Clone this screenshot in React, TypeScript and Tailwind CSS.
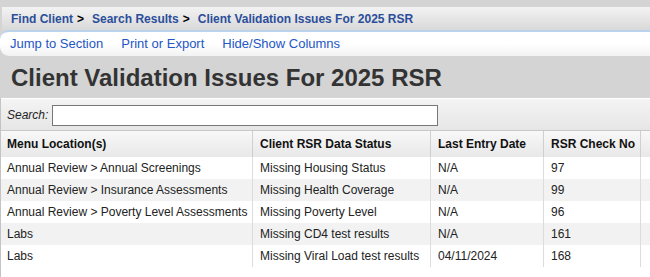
import React from "react";

const rows = [
  { loc: "Annual Review > Annual Screenings", status: "Missing Housing Status", date: "N/A", no: "97" },
  { loc: "Annual Review > Insurance Assessments", status: "Missing Health Coverage", date: "N/A", no: "99" },
  { loc: "Annual Review > Poverty Level Assessments", status: "Missing Poverty Level", date: "N/A", no: "96" },
  { loc: "Labs", status: "Missing CD4 test results", date: "N/A", no: "161" },
  { loc: "Labs", status: "Missing Viral Load test results", date: "04/11/2024", no: "168" },
];

const cols = "grid grid-cols-[252px_178px_113px_97px_1fr]";

export default function App() {
  return (
    <div className="w-[650px] h-[277px] overflow-hidden bg-[#d4d4d4] pt-[7px] font-['Liberation_Sans',Arial,sans-serif]">
      {/* Breadcrumb */}
      <div className="ml-[2px] h-[23px] flex items-center pl-[9px] pt-[1px] bg-gradient-to-b from-[#f3f3f3] to-[#d9d9d9] text-[12px] font-bold">
        <span className="text-[#2b4e9b]">Find Client</span>
        <span className="text-black ml-[4px] mr-[8px]">&gt;</span>
        <span className="text-[#2b4e9b]">Search Results</span>
        <span className="text-black ml-[4px] mr-[8px]">&gt;</span>
        <span className="text-[#2b4e9b]">Client Validation Issues For 2025 RSR</span>
      </div>

      {/* Nav */}
      <div className="h-[26px] border-t-2 border-[#bcd3ee] rounded-l-[9px] bg-gradient-to-b from-white via-white to-[#f2f2f2] flex items-center pl-[10px] gap-[18px] text-[13px] text-[#2356c6]">
        <span>Jump to Section</span>
        <span>Print or Export</span>
        <span>Hide/Show Columns</span>
      </div>

      {/* Title */}
      <div className="h-[42px] flex items-center pl-[11px] pt-[2px]">
        <h1 className="text-[24px] font-bold text-[#333] leading-none">Client Validation Issues For 2025 RSR</h1>
      </div>

      {/* Table container */}
      <div className="border-l border-[#c4c4c4] bg-white h-[182px]">
        <div className="h-[32px] border-t border-white bg-gradient-to-b from-[#f4f4f4] to-[#e6e6e6] flex items-center pl-[6px] pt-[1px]">
          <span className="italic text-[12px] text-[#222] mr-[4px]">Search:</span>
          <input className="w-[386px] h-[21px] bg-white border border-[#777] outline-none" />
        </div>

        <div className={`${cols} h-[27px] border-t border-[#c8c8c8] bg-gradient-to-b from-[#f8f8f8] to-[#e8e8e8] text-[12px] font-bold text-[#111]`}>
          <div className="flex items-center pl-[6px] border-r border-[#cfcfcf]">Menu Location(s)</div>
          <div className="flex items-center pl-[7px] border-r border-[#cfcfcf]">Client RSR Data Status</div>
          <div className="flex items-center pl-[7px] border-r border-[#cfcfcf]">Last Entry Date</div>
          <div className="flex items-center pl-[7px] border-r border-[#cfcfcf]">RSR Check No</div>
          <div />
        </div>

        {rows.map((r, i) => (
          <div
            key={i}
            className={`${cols} h-[22px] text-[12px] text-[#222] ${i % 2 === 1 ? "bg-[#f2f2f2]" : "bg-white"}`}
          >
            <div className="flex items-center pl-[6px] border-r border-[#dcdcdc] whitespace-nowrap">{r.loc}</div>
            <div className="flex items-center pl-[7px] border-r border-[#dcdcdc] whitespace-nowrap">{r.status}</div>
            <div className="flex items-center pl-[7px] border-r border-[#dcdcdc]">{r.date}</div>
            <div className="flex items-center pl-[7px] border-r border-[#dcdcdc]">{r.no}</div>
            <div />
          </div>
        ))}
      </div>
    </div>
  );
}
